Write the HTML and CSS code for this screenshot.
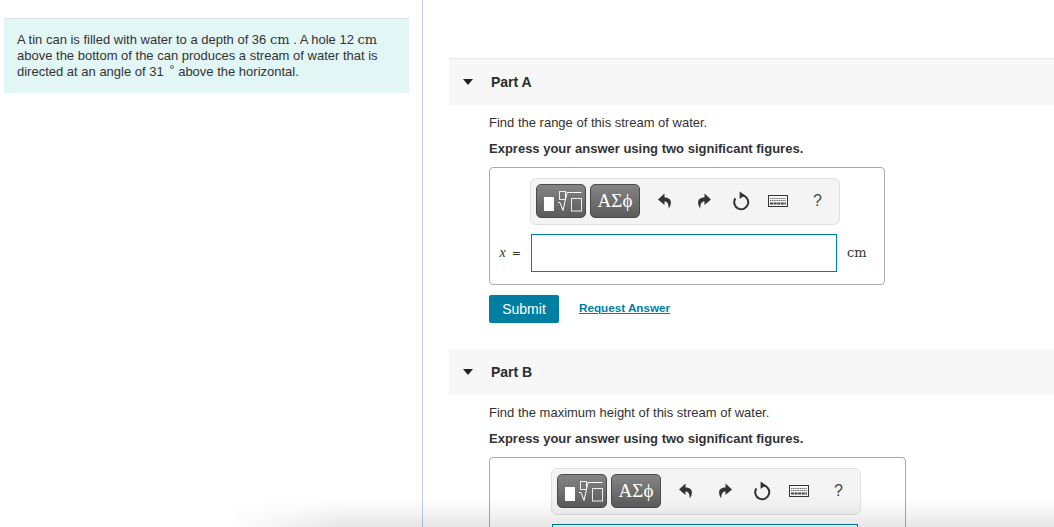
FILE: index.html
```html
<!DOCTYPE html>
<html lang="en">
<head>
    <meta charset="UTF-8">
    <meta name="viewport" content="width=device-width, initial-scale=1.0">
    <title>Tin Can Problem</title>
    <link rel="stylesheet" href="styles.css">
</head>
<body>
    <svg class="icon-defs" width="0" height="0" aria-hidden="true">
        <symbol id="icon-templates" viewBox="0 0 48 32">
            <rect x="7" y="12" width="10" height="14" fill="#fff"/>
            <rect x="22.5" y="6.5" width="6" height="8" fill="none" stroke="#eee"/>
            <path d="M21 17.5 H23 L26 25.5 L30 7.5 H44.5" fill="none" stroke="#fff"/>
            <rect x="34.5" y="13.5" width="10" height="12.5" fill="none" stroke="#eee"/>
        </symbol>
        <symbol id="icon-undo" viewBox="0 0 14 16">
            <path d="M6.5 0.5 L0 6.5 L6.5 12 V8.5 C9.5 8.5 10.5 10.5 10.8 15.5 C13.5 12 15 4.5 6.5 4.5 Z"/>
        </symbol>
        <symbol id="icon-reset" viewBox="0 0 18 20">
            <path d="M10 4.3 A7 7 0 1 1 3.4 7.4" fill="none" stroke="currentColor" stroke-width="2"/>
            <path d="M7.6 0.4 L13 4.2 L7.6 8 Z"/>
        </symbol>
        <symbol id="icon-keyboard" viewBox="0 0 20 12">
            <rect x="0.5" y="0.5" width="19" height="11" fill="#f4f4f4" stroke="#333"/>
            <path d="M2 3.5h16M2 5.5h16" fill="none" stroke="#666" stroke-dasharray="1.2 0.6"/>
            <path d="M2 8.5h16" fill="none" stroke="#444" stroke-width="2" stroke-dasharray="3 0.6"/>
        </symbol>
    </svg>

    <!-- Problem statement -->
    <div class="intro-pane">
        <div class="intro">
            A tin can is filled with water to a depth of 36 <span class="math">cm</span> . A hole 12 <span class="math">cm</span>
            above the bottom of the can produces a stream of water that is
            directed at an angle of 31 <span class="deg">°</span> above the horizontal.
        </div>
    </div>

    <div class="parts-pane">
        <!-- Part A -->
        <div class="part">
            <div class="part-head"><span class="caret"></span><span>Part A</span></div>
            <div class="part-body">
                <p class="question">Find the range of this stream of water.</p>
                <p class="hint">Express your answer using two significant figures.</p>
                <div class="answer-box">
                    <div class="toolbar-row label-a">
                        <div class="toolbar">
                            <button class="tool-btn" aria-label="Templates"><svg class="templates-ico"><use href="#icon-templates"/></svg></button>
                            <button class="tool-btn tool-greek">ΑΣϕ</button>
                            <div class="tool-icons">
                                <svg class="ico"><use href="#icon-undo"/></svg>
                                <svg class="ico ico-flip"><use href="#icon-undo"/></svg>
                                <svg class="ico ico-reset"><use href="#icon-reset"/></svg>
                                <svg class="ico ico-kbd"><use href="#icon-keyboard"/></svg>
                                <span class="help">?</span>
                            </div>
                        </div>
                    </div>
                    <div class="input-row">
                        <div class="var-label label-a"><i class="var-name">x</i><span>=</span></div>
                        <input class="answer-input" type="text">
                        <div class="unit">cm</div>
                    </div>
                </div>
                <div class="actions">
                    <button class="submit">Submit</button>
                    <a class="request" href="#">Request Answer</a>
                </div>
            </div>
        </div>

        <!-- Part B -->
        <div class="part">
            <div class="part-head"><span class="caret"></span><span>Part B</span></div>
            <div class="part-body">
                <p class="question">Find the maximum height of this stream of water.</p>
                <p class="hint">Express your answer using two significant figures.</p>
                <div class="answer-box">
                    <div class="toolbar-row label-b">
                        <div class="toolbar">
                            <button class="tool-btn" aria-label="Templates"><svg class="templates-ico"><use href="#icon-templates"/></svg></button>
                            <button class="tool-btn tool-greek">ΑΣϕ</button>
                            <div class="tool-icons">
                                <svg class="ico"><use href="#icon-undo"/></svg>
                                <svg class="ico ico-flip"><use href="#icon-undo"/></svg>
                                <svg class="ico ico-reset"><use href="#icon-reset"/></svg>
                                <svg class="ico ico-kbd"><use href="#icon-keyboard"/></svg>
                                <span class="help">?</span>
                            </div>
                        </div>
                    </div>
                    <div class="input-row">
                        <div class="var-label label-b"></div>
                        <input class="answer-input" type="text">
                        <div class="unit"></div>
                    </div>
                </div>
            </div>
        </div>
    </div>

    <!-- Fade along the bottom of the window -->
    <div class="bottom-shade"></div>
</body>
</html>
```

FILE: styles.css
```css
body {
    margin: 0;
    display: flex;
    height: 527px;
    overflow: hidden;
    position: relative;
    background-color: #fff;
    font-family: "Liberation Sans", Arial, sans-serif;
    font-size: 13px;
    color: #333;
}
.icon-defs {
    position: absolute;
}

/* Problem statement */
.intro-pane {
    width: 423px;
    flex-shrink: 0;
    box-sizing: border-box;
    padding: 18px 13px 0 4px;
    border-right: 1px solid #bccbe6;
}
.intro {
    padding: 13px 13px 13px;
    background-color: #e2f6f6;
    border-top: 1px solid #dcdfe6;
    line-height: 16px;
    height: 48px;
}
.math {
    font-family: "DejaVu Serif", serif;
    font-size: 13px;
}
.deg {
    line-height: 0;
    vertical-align: 2px;
    margin: 0 0 0 2px;
}

/* Parts */
.parts-pane {
    flex: 1;
    height: 527px;
    overflow: hidden;
    padding: 58px 0 0 26px;
    box-sizing: border-box;
    min-width: 0;
}
.part-head {
    display: flex;
    align-items: center;
    height: 46px;
    padding-left: 14px;
    background-color: #f7f7f7;
    border-top: 1px solid #e6e6e6;
    font-size: 14px;
    font-weight: bold;
    color: #2b2b2b;
}
.part + .part .part-head {
    border-top: none;
}
.caret {
    width: 0;
    height: 0;
    margin-right: 18px;
    border-left: 5px solid transparent;
    border-right: 5px solid transparent;
    border-top: 6px solid #222;
}
.part-body {
    padding: 10px 0 26px 40px;
}
.question {
    margin: 0;
    line-height: 16px;
}
.hint {
    margin: 10px 0 0;
    line-height: 16px;
    font-weight: bold;
}

/* Answer box */
.answer-box {
    width: fit-content;
    margin-top: 10px;
    padding: 10px 0 12px;
    border: 1px solid #aaa;
    border-radius: 4px;
}
.toolbar-row.label-a {
    padding-left: 40px;
}
.toolbar-row.label-b {
    padding-left: 61px;
}
.toolbar {
    display: flex;
    align-items: center;
    box-sizing: border-box;
    width: 310px;
    height: 47px;
    padding: 0 0 2px 5px;
    background-color: #f4f4f4;
    border: 1px solid #e0e0e0;
    border-radius: 6px;
}
.tool-btn {
    box-sizing: border-box;
    width: 50px;
    height: 34px;
    margin-right: 4px;
    padding: 0;
    color: #fff;
    background: linear-gradient(#848484, #5b5b5b);
    border: 1px solid #4a4a4a;
    border-radius: 5px;
}
.tool-greek {
    font-family: "Liberation Serif", serif;
    font-size: 19px;
}
.templates-ico {
    display: block;
    width: 48px;
    height: 32px;
}
.tool-icons {
    display: flex;
    align-items: center;
    margin-left: 14px;
    color: #333;
}
.ico {
    width: 14px;
    height: 16px;
    margin-right: 25px;
    fill: currentColor;
}
.ico-flip {
    transform: scaleX(-1);
    margin-right: 21px;
}
.ico-reset {
    width: 18px;
    height: 20px;
    margin-right: 18px;
}
.ico-kbd {
    width: 20px;
    height: 12px;
    margin-right: 25px;
}
.help {
    font-size: 16px;
    color: #444;
}
.input-row {
    display: flex;
    align-items: center;
    margin-top: 9px;
}
.var-label {
    box-sizing: border-box;
    padding-right: 10px;
    display: flex;
    justify-content: flex-end;
    align-items: baseline;
    gap: 6px;
    font-family: "DejaVu Serif", serif;
    font-size: 11px;
}
.var-name {
    font-family: "Liberation Serif", serif;
    font-size: 14px;
}
.var-label.label-a {
    width: 41px;
}
.var-label.label-b {
    width: 62px;
}
.answer-input {
    box-sizing: border-box;
    width: 306px;
    height: 38px;
    margin: 0;
    padding: 0;
    background-color: #fff;
    border: 1px solid #007fa3;
}
.unit {
    width: 47px;
    padding: 0 0 2px 10px;
    box-sizing: border-box;
    font-family: "DejaVu Serif", serif;
    font-size: 13px;
}

/* Submit row */
.actions {
    display: flex;
    align-items: center;
    gap: 20px;
    margin-top: 10px;
}
.submit {
    width: 70px;
    height: 28px;
    padding: 0;
    background-color: #007fa3;
    color: #fff;
    border: none;
    border-radius: 2px;
    font-family: "Liberation Sans", Arial, sans-serif;
    font-size: 14px;
}
.request {
    position: relative;
    top: -2px;
    color: #007fa3;
    font-size: 11.7px;
    font-weight: bold;
}

.bottom-shade {
    position: absolute;
    left: 225px;
    right: 0;
    bottom: 0;
    height: 34px;
    background: linear-gradient(rgba(0, 0, 0, 0) 10%, rgba(0, 0, 0, 0.03) 50%, rgba(0, 0, 0, 0.1));
    -webkit-mask-image: linear-gradient(to right, transparent, #000 120px);
    mask-image: linear-gradient(to right, transparent, #000 120px);
    pointer-events: none;
}
```
